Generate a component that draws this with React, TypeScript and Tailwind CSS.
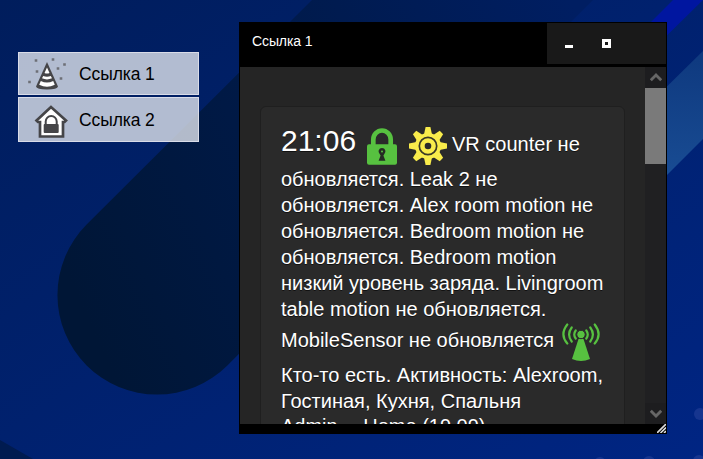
import React from "react";

const GREEN = "#57c140";

function Wallpaper() {
  return (
    <svg className="absolute inset-0" width="703" height="459" viewBox="0 0 703 459">
      <defs>
        <linearGradient id="sky" x1="0" y1="0" x2="1" y2="1">
          <stop offset="0" stopColor="#001d5c" />
          <stop offset="0.35" stopColor="#002069" />
          <stop offset="1" stopColor="#002583" />
        </linearGradient>
        <linearGradient id="pill" gradientUnits="userSpaceOnUse" x1="60" y1="260" x2="580" y2="20">
          <stop offset="0" stopColor="#001636" />
          <stop offset="0.5" stopColor="#001a4a" />
          <stop offset="1" stopColor="#001e62" />
        </linearGradient>
        <linearGradient id="beam" gradientUnits="userSpaceOnUse" x1="0" y1="60" x2="0" y2="170">
          <stop offset="0" stopColor="#0f3a80" />
          <stop offset="1" stopColor="#184b92" />
        </linearGradient>
      </defs>
      <rect width="703" height="459" fill="url(#sky)" />
      <path d="M312 0L86.600 224.600A99.500 99.500 0 0 0 227.400 365.400L593 0Z" fill="url(#pill)" />
      <path d="M673 0H703L640 62V33Z" fill="#0016a0" />
      <path d="M703 51L640 113V202L703 139Z" fill="url(#beam)" />
      <path d="M0 440L33 459H0Z" fill="#001b50" />
      <g fill="#16358f">
        <circle cx="700" cy="414" r="6" />
        <circle cx="600" cy="463" r="6" />
        <circle cx="649" cy="462" r="6" />
        <circle cx="699" cy="461" r="6" />
      </g>
    </svg>
  );
}

function HatIcon() {
  return (
    <svg width="40" height="36" viewBox="0 0 40 36" className="block">
      <path d="M19 6L8 30.500Q8.500 33.500 19 33.500T30 30.500Z" fill="#454548" />
      <path d="M19 11.500L16.500 17Q19 18 21.500 17ZM15.200 20L14 22.300Q19 24.500 24 22.300L22.800 20Q19 21.500 15.200 20ZM12.800 25L11.200 28.800Q19 32.500 26.800 28.800L25.200 25Q19 28.200 12.800 25Z" fill="#fff" />
      <path d="M6.700 3.200h2.600v2.600h-2.600zM23.700 2.200h2.600v2.600h-2.600zM35.200 7.200h2.600v2.600h-2.600zM28.700 11.200h2.600v2.600h-2.600zM7.700 14.200h2.600v2.600h-2.600zM31.700 21.200h2.600v2.600h-2.600zM.2 24.700h2.600v2.600h-2.600z" fill="#6d6f76" />
    </svg>
  );
}

function HouseIcon() {
  return (
    <svg width="34" height="35" viewBox="0 0 34 35" className="block">
      <path d="M17 3L2.500 16.500L4 18H6V32.500H29V18H30.500L32 16.500Z" fill="#fff" stroke="#454548" strokeWidth="2.700" />
      <path d="M11.700 21V17.500A5.500 5.500 0 0 1 22.700 17.500V21" fill="none" stroke="#454548" strokeWidth="2" />
      <rect x="9.700" y="20" width="15" height="9" rx="1" fill="#454548" />
    </svg>
  );
}

function LockIcon() {
  return (
    <svg width="30" height="37" viewBox="0 0 30 37" className="block">
      <path d="M6.300 18V11.500A8.700 9 0 0 1 23.700 11.500V18" fill="none" stroke={GREEN} strokeWidth="4.700" />
      <rect y="16.300" width="30" height="20.500" rx="2" fill={GREEN} />
      <path d="M15 20a3.500 3.500 0 0 1 2.200 6.200l-.8 1.300 2 5.300h-6.800l2-5.300-.8-1.300a3.500 3.500 0 0 1 2.200-6.200z" fill="#252a24" />
      <circle cx="15" cy="23.500" r="1" fill={GREEN} />
    </svg>
  );
}

function GearIcon() {
  return (
    <svg width="38" height="38" viewBox="-19 -19 38 38" className="block">
      <g fill="#f9ec4b">
        <circle r="13" />
        {[0, 45, 90, 135, 180, 225, 270, 315].map((a) => (
          <path key={a} transform={`rotate(${a})`} d="M-4 -11.500L-2.400 -19H2.400L4 -11.500Z" />
        ))}
      </g>
      <circle r="8.700" fill="none" stroke="#3a3926" strokeWidth="1.700" />
      <circle r="3.300" fill="#2a2a2a" />
    </svg>
  );
}

function AntennaIcon() {
  return (
    <svg width="38" height="40" viewBox="0 0 38 40" className="block">
      <path d="M16.500 17H21.500L28 37Q19 41 10 37Z" fill={GREEN} />
      <circle cx="19" cy="12.500" r="4.200" fill={GREEN} stroke="#2a2a2a" strokeWidth="1" />
      <g fill="none" stroke={GREEN} strokeWidth="2.200" strokeLinecap="round">
        <path d="M13.700 8.500Q10.800 12.500 13.700 16.500M9.700 5.500Q4.500 12.500 9.700 19.500M5.300 2.500Q-2.500 12.500 5.300 21.500" />
        <path d="M24.300 8.500Q27.200 12.500 24.300 16.500M28.300 5.500Q33.500 12.500 28.300 19.500M32.700 2.500Q40.500 12.500 32.700 21.500" />
      </g>
    </svg>
  );
}

function Chevron({ down = false }: { down?: boolean }) {
  return (
    <div className="flex h-[21px] w-[21px] shrink-0 items-center justify-center bg-[#1d1d1f]">
      <svg width="12" height="9" viewBox="0 0 12 9" className={down ? "rotate-180" : ""}>
        <path d="M.8 7.300L6 2L11.200 7.300" fill="none" stroke="#666" strokeWidth="2.800" />
      </svg>
    </div>
  );
}

function ShortcutLink({ label, icon, className }: { label: string; icon: React.ReactNode; className: string }) {
  return (
    <div className={`flex w-[181px] items-center border border-[#d9dce8] bg-[#dfe3ec]/80 text-black ${className}`}>
      <div className="flex w-[60px] shrink-0 pl-[9px]">{icon}</div>
      <span className="text-[17.500px] leading-5 tracking-[-0.1px]">{label}</span>
    </div>
  );
}

export default function App() {
  return (
    <div className="relative h-[459px] w-[703px] overflow-hidden bg-[#002070] font-['Liberation_Sans',Arial,sans-serif]">
      <Wallpaper />
      <div className="relative flex items-start gap-10 pl-[18px]">
        <nav className="flex flex-col gap-[2px] pt-[52px]">
          <ShortcutLink label="Ссылка 1" className="h-[43px]" icon={<HatIcon />} />
          <ShortcutLink label="Ссылка 2" className="h-[45px]" icon={<div className="pt-1 pl-[6px]"><HouseIcon /></div>} />
        </nav>
        <section className="mt-[22px] flex h-[412px] w-[428px] flex-col border border-black bg-black">
          <header className="flex h-11 shrink-0 justify-between">
            <h1 className="pt-2 pl-3 text-sm leading-5 tracking-[-0.1px] text-white">Ссылка 1</h1>
            <div className="flex h-[41px] w-[119px] items-center bg-[#191919]">
              <div className="mt-1.5 ml-[18px] h-[3px] w-2 bg-white" />
              <div className="ml-[29px] h-[9px] w-[9px] border-[3px] border-white" />
            </div>
          </header>
          <div className="flex h-[357px] shrink-0 overflow-hidden">
            <main className="h-[357px] w-[405px] shrink-0 overflow-hidden bg-[#252525] px-5 pt-[39px]">
              <article className="h-[420px] w-[365px] rounded-md border border-[#1f1f1f] bg-[#2a2a2a] pt-4 pl-5 text-xl leading-[26px] whitespace-nowrap text-white [text-shadow:0_1px_0_#111]">
                <div className="flex h-[43px]">
                  <span className="w-[86px] text-[30px] leading-[36px]">21:06</span>
                  <div className="mt-[5px] w-[42px]"><LockIcon /></div>
                  <div className="mt-[4px] w-[43px]"><GearIcon /></div>
                  <span className="mt-[8px]">VR counter не</span>
                </div>
                <p>обновляется. Leak 2 не</p>
                <p>обновляется. Alex room motion не</p>
                <p>обновляется. Bedroom motion не</p>
                <p>обновляется. Bedroom motion</p>
                <p>низкий уровень заряда. Livingroom</p>
                <p>table motion не обновляется.</p>
                <div className="flex h-10">
                  <span className="mt-[5px] w-[281px]">MobileSensor не обновляется</span>
                  <AntennaIcon />
                </div>
                <p>Кто-то есть. Активность: Alexroom,</p>
                <p>Гостиная, Кухня, Спальня</p>
                <p className="-mt-px">Admin… Home (19.09)</p>
              </article>
            </main>
            <div className="flex w-[21px] flex-col bg-[#202022]">
              <Chevron />
              <div className="h-[76px] bg-[#7a7a7a]" />
              <div className="grow" />
              <Chevron down />
            </div>
          </div>
          <footer className="flex h-[9px] justify-end">
            <svg width="9" height="9" viewBox="0 0 9 9">
              <path d="M0 9L9 0M3.500 9L9 3.500M7 9L9 7" stroke="#ddd" strokeWidth="1.600" />
            </svg>
          </footer>
        </section>
      </div>
    </div>
  );
}
